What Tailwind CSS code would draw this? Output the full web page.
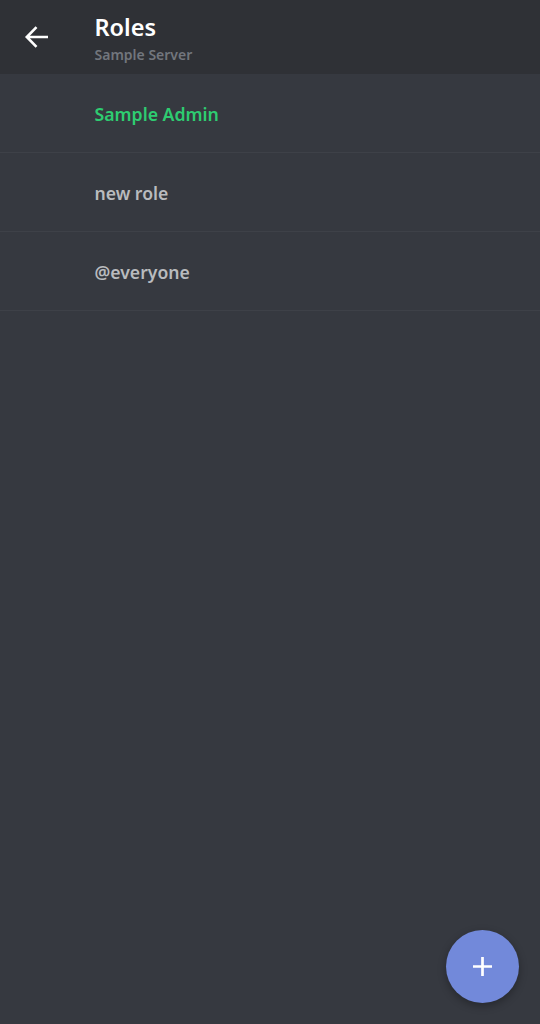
<!DOCTYPE html>
<html>
<head>
<meta charset="utf-8">
<script src="https://cdn.jsdelivr.net/npm/@tailwindcss/browser@4"></script>
</head>
<body class="bg-[#36393f] font-['Noto_Sans',sans-serif]">
<div class="relative h-[1024px] w-[540px] overflow-hidden bg-[#363940]">
  <header class="flex h-[74px] items-center bg-[#2f3136]">
    <div class="flex w-[94.5px] items-center pl-[24px]">
      <svg class="size-[26px]" viewBox="0 0 26 26" fill="none" stroke="#ffffff" stroke-width="2.6"><path d="M24 13H3M12.5 3.2 2.8 13l9.7 9.8"/></svg>
    </div>
    <div class="flex flex-col pt-[3px]">
      <h1 class="text-[23.5px] leading-[30px] font-semibold text-white">Roles</h1>
      <p class="mt-[3px] text-[14px] leading-[20px] font-semibold text-[#72767d]">Sample Server</p>
    </div>
  </header>
  <ul>
    <li class="flex h-[79px] items-center border-b border-[#3e4148] pt-[2px] pl-[94.5px] text-[17.7px] font-semibold text-[#2ecc71]">Sample Admin</li>
    <li class="flex h-[79px] items-center border-b border-[#3e4148] pt-[2px] pl-[94.5px] text-[17.6px] font-semibold text-[#b9bbbe]">new role</li>
    <li class="flex h-[79px] items-center border-b border-[#3e4148] pt-[2px] pl-[94.5px] text-[17.6px] font-semibold text-[#b9bbbe]">@everyone</li>
  </ul>
  <button class="absolute top-[929.5px] left-[445.5px] flex size-[73.5px] items-center justify-center rounded-full bg-[#7289da] shadow-[0_3px_8px_rgba(0,0,0,0.3)]">
    <svg class="size-[19px]" viewBox="0 0 19 19" fill="none" stroke="#ffffff" stroke-width="2.7"><path d="M0 9.5h19M9.5 0v19"/></svg>
  </button>
</div>
</body>
</html>
